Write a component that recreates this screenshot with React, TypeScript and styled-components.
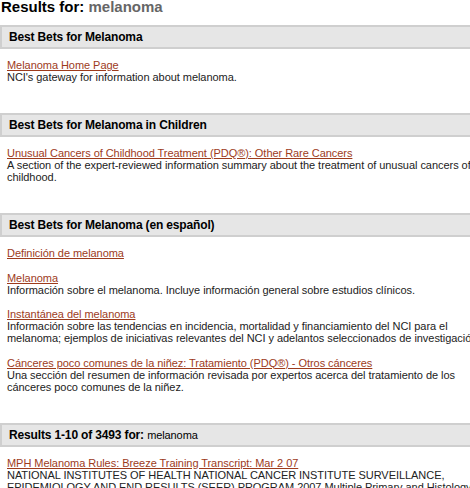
import React from "react"
import styled, { createGlobalStyle } from "styled-components"

const GlobalStyle = createGlobalStyle`
  body {
    margin: 0;
    background: #fff;
    font-family: "Liberation Sans", Arial, sans-serif;
    overflow: hidden;
  }
`

const Page = styled.div`
  width: 470px;
  height: 488px;
  overflow: hidden;
  white-space: nowrap;
`

const Title = styled.h1`
  margin: 0;
  padding: 0 0 0 1px;
  height: 25px;
  font-size: 15px;
  line-height: 13px;
  font-weight: bold;
  color: #000;
`

const Term = styled.span`
  color: #666;
`

const Section = styled.section`
  padding-bottom: 30px;
`

const Bar = styled.h2`
  margin: 0;
  height: 20px;
  box-sizing: content-box;
  background: #e6e6e6;
  border: 2px solid #cfcfcf;
  border-right: none;
  padding-left: 7px;
  font-size: 12px;
  letter-spacing: -0.15px;
  line-height: 20px;
  font-weight: bold;
  color: #000;
`

const Query = styled.span`
  font-weight: normal;
  font-size: 11px;
  letter-spacing: -0.1px;
`

const Items = styled.div`
  display: flex;
  flex-direction: column;
  gap: 12.5px;
  padding: 10px 0 0 7px;
`

const Item = styled.div`
  font-size: 11px;
  letter-spacing: -0.05px;
  line-height: 12px;
  color: #222;
`

const Link = styled.a`
  display: block;
  color: #9d3b1c;
  text-decoration: underline;
`

type Entry = { title: string; desc?: string[] }

const sections: { heading: string; items: Entry[] }[] = [
  {
    heading: "Best Bets for Melanoma",
    items: [
      { title: "Melanoma Home Page", desc: ["NCI's gateway for information about melanoma."] },
    ],
  },
  {
    heading: "Best Bets for Melanoma in Children",
    items: [
      {
        title: "Unusual Cancers of Childhood Treatment (PDQ®): Other Rare Cancers",
        desc: [
          "A section of the expert-reviewed information summary about the treatment of unusual cancers of",
          "childhood.",
        ],
      },
    ],
  },
  {
    heading: "Best Bets for Melanoma (en español)",
    items: [
      { title: "Definición de melanoma" },
      {
        title: "Melanoma",
        desc: ["Información sobre el melanoma. Incluye información general sobre estudios clínicos."],
      },
      {
        title: "Instantánea del melanoma",
        desc: [
          "Información sobre las tendencias en incidencia, mortalidad y financiamiento del NCI para el",
          "melanoma; ejemplos de iniciativas relevantes del NCI y adelantos seleccionados de investigación",
        ],
      },
      {
        title: "Cánceres poco comunes de la niñez: Tratamiento (PDQ®) - Otros cánceres",
        desc: [
          "Una sección del resumen de información revisada por expertos acerca del tratamiento de los",
          "cánceres poco comunes de la niñez.",
        ],
      },
    ],
  },
]

const renderItem = (it: Entry) => (
  <Item key={it.title}>
    <Link href="#">{it.title}</Link>
    {it.desc?.map(line => <div key={line}>{line}</div>)}
  </Item>
)

export default function App() {
  return (
    <Page>
      <GlobalStyle />
      <Title>
        Results for: <Term>melanoma</Term>
      </Title>
      {sections.map(s => (
        <Section key={s.heading}>
          <Bar>{s.heading}</Bar>
          <Items>{s.items.map(renderItem)}</Items>
        </Section>
      ))}
      <Section>
        <Bar>
          Results 1-10 of 3493 for: <Query>melanoma</Query>
        </Bar>
        <Items>
          {renderItem({
            title: "MPH Melanoma Rules: Breeze Training Transcript: Mar 2 07",
            desc: [
              "NATIONAL INSTITUTES OF HEALTH NATIONAL CANCER INSTITUTE SURVEILLANCE,",
              "EPIDEMIOLOGY AND END RESULTS (SEER) PROGRAM 2007 Multiple Primary and Histology",
            ],
          })}
        </Items>
      </Section>
    </Page>
  )
}
